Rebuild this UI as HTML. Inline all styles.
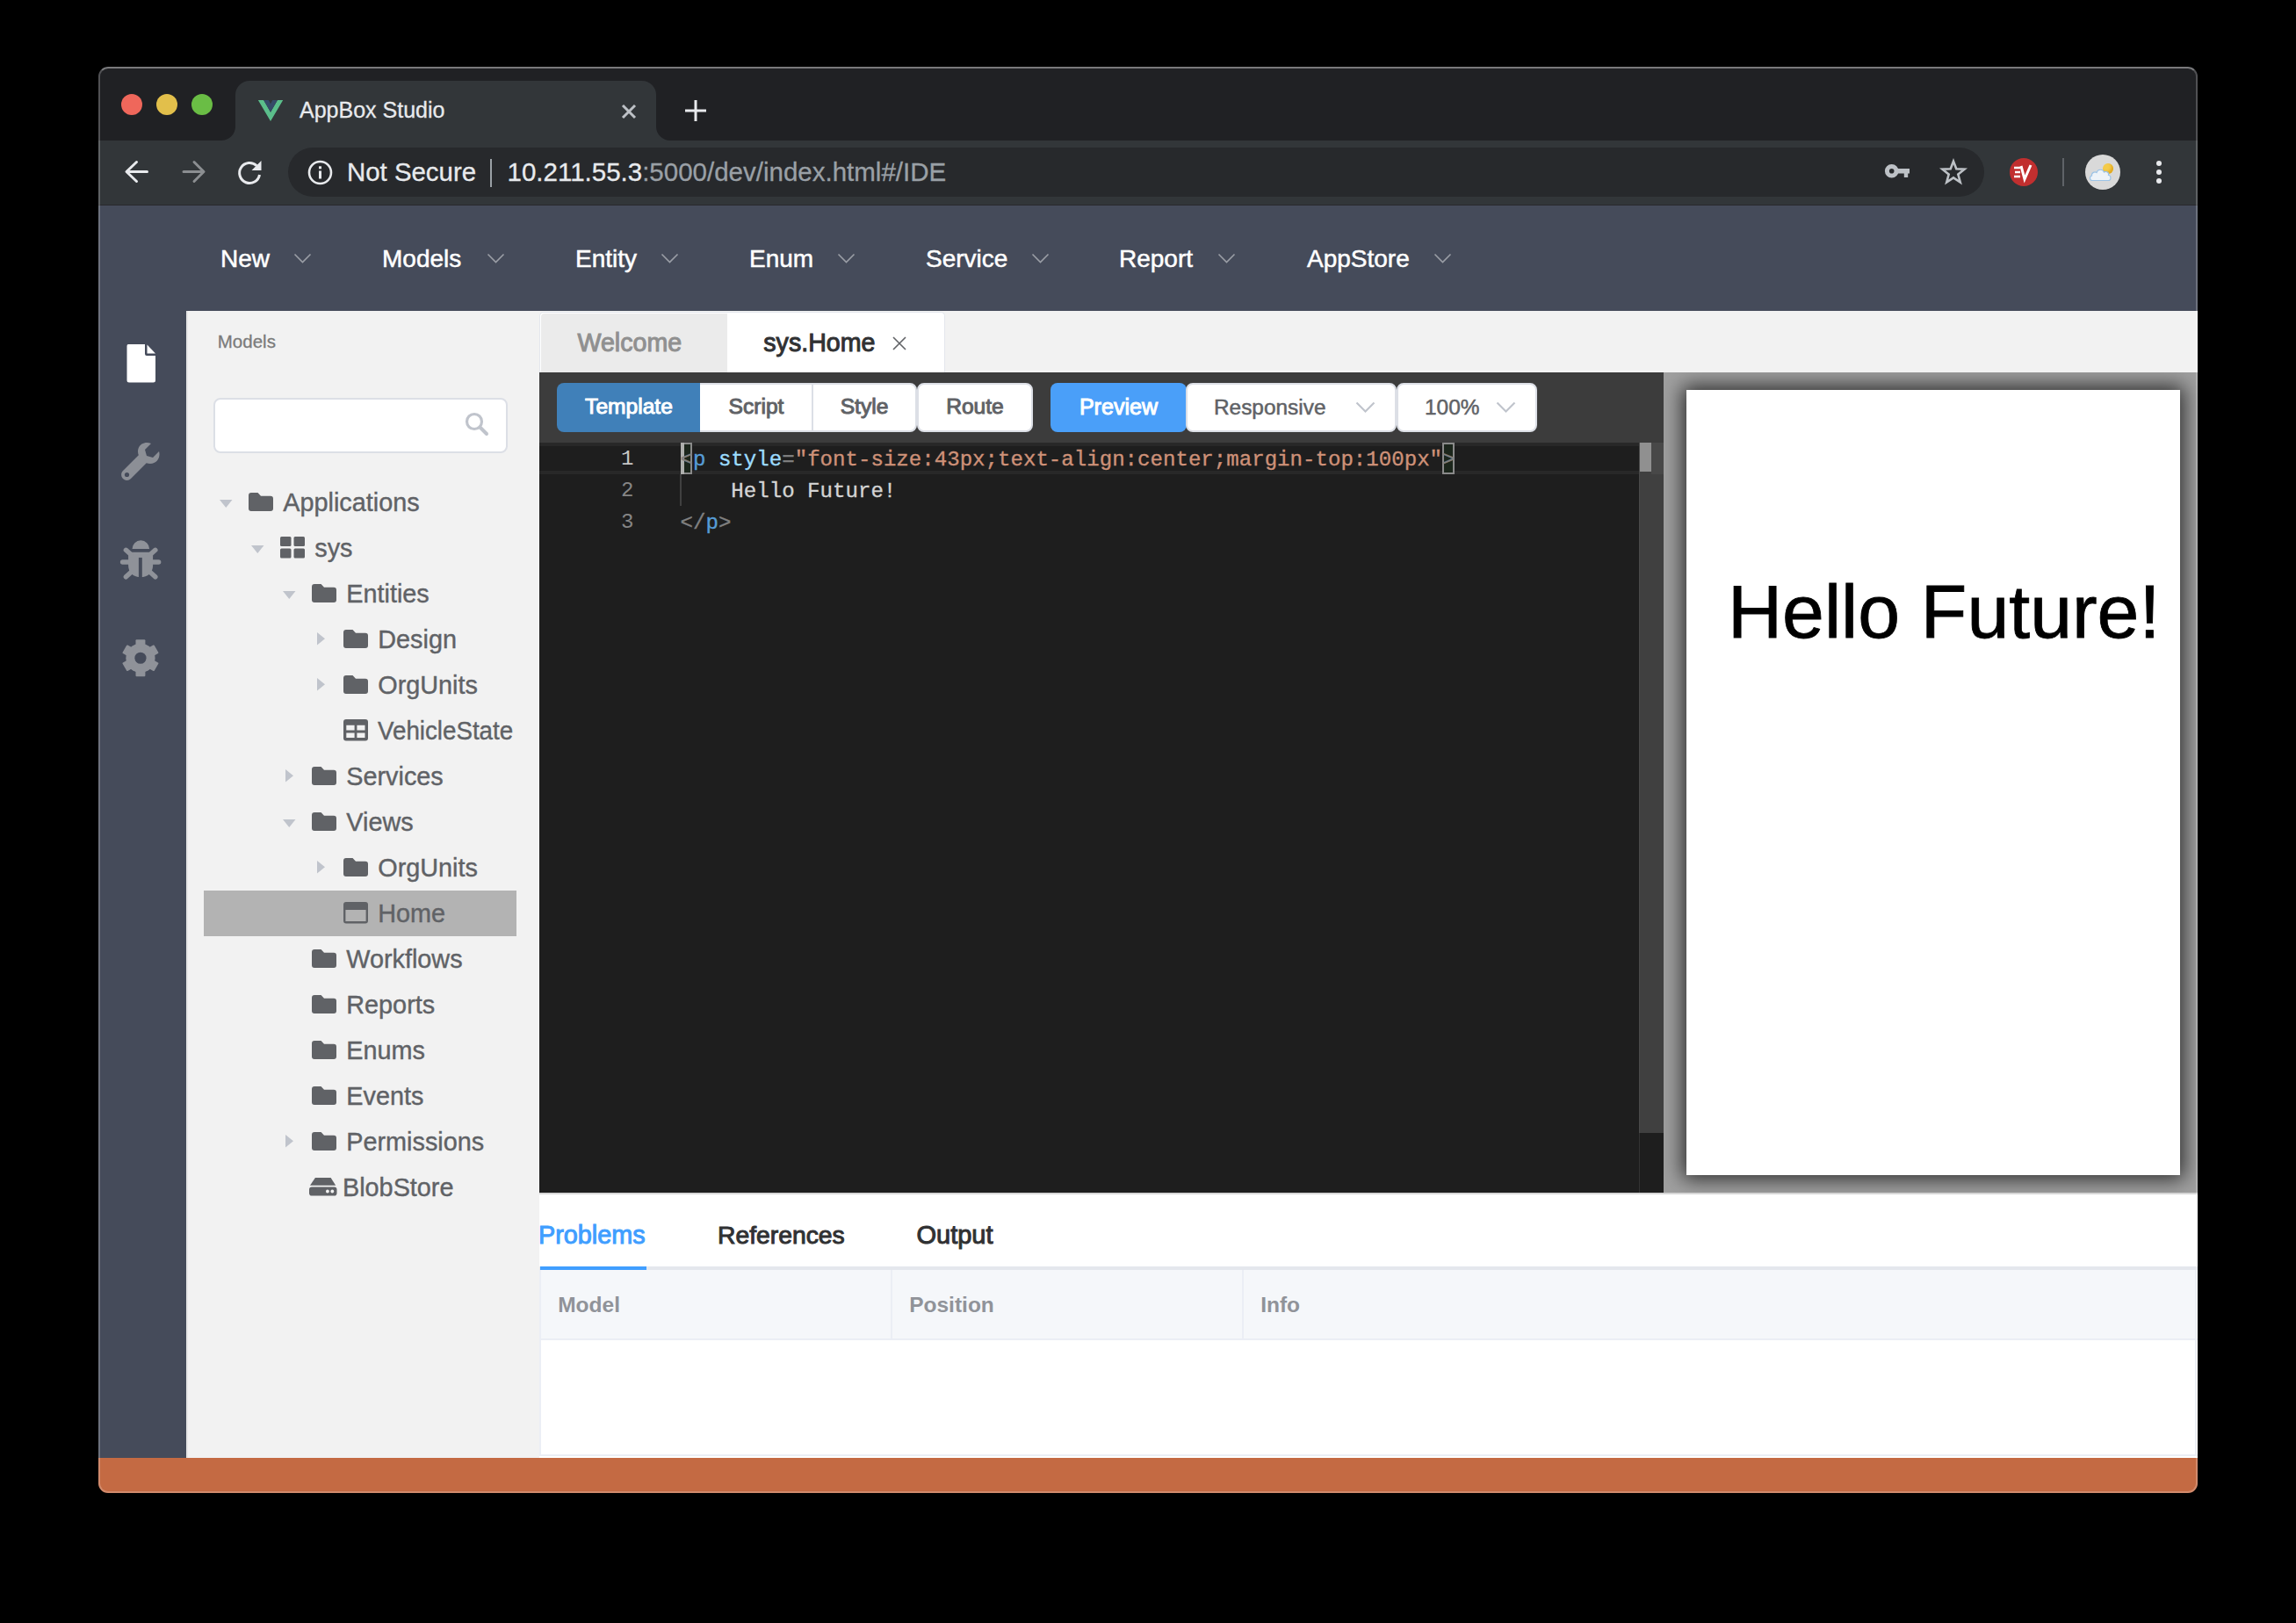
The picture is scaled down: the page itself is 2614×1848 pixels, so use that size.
<!DOCTYPE html>
<html><head><meta charset="utf-8">
<style>
*{box-sizing:border-box;margin:0;padding:0}
html,body{width:2614px;height:1848px;background:#000;overflow:hidden;font-family:"Liberation Sans",sans-serif}
.a{position:absolute}
.t{position:absolute;white-space:pre;line-height:1}
#win{position:absolute;left:112px;top:76px;width:2390px;height:1624px;border-radius:11px;overflow:hidden;background:#202124}
</style></head><body>
<div id="win">
  <!-- title bar -->
  <div class="a" style="left:0;top:0;width:2390px;height:84px;background:#202124"></div>
  <!-- traffic lights -->
  <div class="a" style="left:26px;top:31px;width:24px;height:24px;border-radius:50%;background:#ef675b"></div>
  <div class="a" style="left:66px;top:31px;width:24px;height:24px;border-radius:50%;background:#e2bf4b"></div>
  <div class="a" style="left:106px;top:31px;width:24px;height:24px;border-radius:50%;background:#6abd45"></div>
  <!-- tab -->
  <div class="a" style="left:156px;top:16px;width:479px;height:68px;background:#323639;border-radius:16px 16px 0 0"></div>
  <!-- toolbar -->
  <div class="a" style="left:0;top:84px;width:2390px;height:74px;background:#323639;border-bottom:1px solid #28292c"></div>
  <!-- omnibox -->
  <div class="a" style="left:216px;top:92px;width:1931px;height:56px;border-radius:28px;background:#27292c"></div>
  <!-- tab flares -->
  <svg class="a" style="left:140px;top:68px" width="16" height="16" viewBox="0 0 16 16"><path d="M16 0 V16 H0 A16 16 0 0 0 16 0 Z" fill="#323639"/></svg>
  <svg class="a" style="left:635px;top:68px" width="16" height="16" viewBox="0 0 16 16"><path d="M0 0 V16 H16 A16 16 0 0 1 0 0 Z" fill="#323639"/></svg>
  <!-- vue logo -->
  <svg class="a" style="left:181px;top:37px" width="30" height="26" viewBox="0 0 30 26">
    <path d="M0.86 1 L7.17 1 L15.03 14.7 L22.9 1 L29.2 1 L15.03 24.9 Z" fill="#5bbe8b"/>
    <path d="M7.17 1 L12.8 1 L15.03 5.2 L17.3 1 L22.9 1 L15.03 14.7 Z" fill="#354a68"/>
  </svg>
  <div class="t" style="left:229px;top:36.8px;font-size:25px;color:#e8eaed;-webkit-text-stroke:0.3px #e8eaed">AppBox Studio</div>
  <!-- tab close -->
  <svg class="a" style="left:594px;top:41px" width="20" height="20" viewBox="0 0 20 20"><path d="M3 3 L17 17 M17 3 L3 17" stroke="#bdc1c6" stroke-width="3" stroke-linecap="butt"/></svg>
  <!-- plus -->
  <svg class="a" style="left:666px;top:36px" width="28" height="28" viewBox="0 0 28 28"><path d="M14 2 V26 M2 14 H26" stroke="#e8eaed" stroke-width="3"/></svg>
  <!-- nav -->
  <svg class="a" style="left:26px;top:102px" width="36" height="36" viewBox="0 0 36 36"><path d="M29.5 17.5 H6.5 M17.5 6.5 L6 17.5 L17.5 28.5" stroke="#e8eaed" stroke-width="3" fill="none" stroke-linecap="round" stroke-linejoin="round"/></svg>
  <svg class="a" style="left:91px;top:102px" width="36" height="36" viewBox="0 0 36 36"><path d="M6 17.5 H28.5 M18 6.5 L29 17.5 L18 28.5" stroke="#8b8e91" stroke-width="3" fill="none" stroke-linecap="round" stroke-linejoin="round"/></svg>
  <svg class="a" style="left:155px;top:103px" width="36" height="36" viewBox="0 0 36 36"><path d="M28.5 20 A11.5 11.5 0 1 1 25.2 9.8" stroke="#e8eaed" stroke-width="3" fill="none"/><path d="M30.5 4 V15 H19.5 Z" fill="#e8eaed"/></svg>
  <!-- omnibox content -->
  <svg class="a" style="left:237px;top:105px" width="31" height="31" viewBox="0 0 31 31"><circle cx="15.5" cy="15.5" r="12.5" stroke="#e8eaed" stroke-width="2.6" fill="none"/><rect x="14" y="13.5" width="3" height="9" fill="#e8eaed"/><rect x="14" y="8.3" width="3" height="3" fill="#e8eaed"/></svg>
  <div class="t" style="left:283px;top:105.1px;font-size:29.4px;color:#e8eaed;-webkit-text-stroke:0.3px #e8eaed">Not Secure</div>
  <div class="a" style="left:446px;top:105px;width:2px;height:32px;background:#9aa0a6"></div>
  <div class="t" style="left:465.5px;top:104.9px;font-size:29.5px;color:#9aa0a6;-webkit-text-stroke:0.3px"><!----><span style="color:#e8eaed">10.211.55.3</span>:5000/dev/index.html#/IDE</div>
  <!-- right icons -->
  <svg class="a" style="left:2032px;top:106px" width="32" height="28" viewBox="0 0 32 28"><circle cx="9.7" cy="12.8" r="5.3" stroke="#bdc1c6" stroke-width="5" fill="none"/><path d="M14.5 10 H30 V15.6 H28.2 V20 H23.8 V15.6 H14.5 Z" fill="#bdc1c6"/></svg>
  <svg class="a" style="left:2095px;top:104px" width="34" height="32" viewBox="0 0 34 32"><path d="M17.00 3.60 L20.29 12.27 L29.55 12.72 L22.33 18.53 L24.76 27.48 L17.00 22.40 L9.24 27.48 L11.67 18.53 L4.45 12.72 L13.71 12.27 Z" stroke="#bdc1c6" stroke-width="2.6" fill="none" stroke-linejoin="miter"/></svg>
  <div class="a" style="left:2176px;top:104px;width:32px;height:32px;border-radius:50%;background:#c12f2f"></div>
  <svg class="a" style="left:2176px;top:104px" width="32" height="32" viewBox="0 0 32 32"><path d="M5 11 H12 M6 16 H12 M5 21 H12" stroke="#fff" stroke-width="2.4"/><path d="M13 9 L17 24 L24 8" stroke="#fff" stroke-width="3" fill="none"/></svg>
  <div class="a" style="left:2236px;top:104px;width:2px;height:32px;background:#5f6368"></div>
  <div class="a" style="left:2262px;top:100px;width:40px;height:40px;border-radius:50%;background:#d9d9d9"></div>
  <div class="a" style="left:2281.5px;top:109.8px;width:12px;height:12px;border-radius:50%;background:#f4cb4a;box-shadow:inset -2px -2px 3px #e0a820"></div>
  <svg class="a" style="left:2266px;top:112px" width="28" height="20" viewBox="0 0 28 20"><path d="M4 17.5 C1 17.5 0.5 13 3.5 12 C3 8.5 7 7 9 8.5 C10 4.5 16 4 17.5 8 C20 6.5 23.5 8.5 22.5 11.5 C25.5 11.5 26 17.5 22.5 17.5 Z" fill="#eef3f8" stroke="#9cc3e6" stroke-width="1.2"/></svg>
  <div class="a" style="left:2343px;top:107px;width:6px;height:6px;border-radius:50%;background:#e8eaed"></div>
  <div class="a" style="left:2343px;top:117px;width:6px;height:6px;border-radius:50%;background:#e8eaed"></div>
  <div class="a" style="left:2343px;top:127px;width:6px;height:6px;border-radius:50%;background:#e8eaed"></div>
  <!-- app header -->
  <div class="a" style="left:0;top:158px;width:2390px;height:120px;background:#454b5a"></div>
  <!-- left icon bar -->
  <div class="a" style="left:0;top:278px;width:100px;height:1306px;background:#454b5a"></div>
  <!-- menu -->
  <div class="t" style="left:139px;top:205px;font-size:28px;color:#fff;-webkit-text-stroke:0.5px #fff">New</div>
  <svg class="a" style="left:222.0px;top:211.5px" width="21" height="13" viewBox="0 0 21 13"><path d="M1.5 1.5 L10.5 10.5 L19.5 1.5" stroke="#9a9ea6" stroke-width="1.6" fill="none"/></svg>
  <div class="t" style="left:323px;top:205px;font-size:28px;color:#fff;-webkit-text-stroke:0.5px #fff">Models</div>
  <svg class="a" style="left:442.0px;top:211.5px" width="21" height="13" viewBox="0 0 21 13"><path d="M1.5 1.5 L10.5 10.5 L19.5 1.5" stroke="#9a9ea6" stroke-width="1.6" fill="none"/></svg>
  <div class="t" style="left:543px;top:205px;font-size:28px;color:#fff;-webkit-text-stroke:0.5px #fff">Entity</div>
  <svg class="a" style="left:640.0px;top:211.5px" width="21" height="13" viewBox="0 0 21 13"><path d="M1.5 1.5 L10.5 10.5 L19.5 1.5" stroke="#9a9ea6" stroke-width="1.6" fill="none"/></svg>
  <div class="t" style="left:741px;top:205px;font-size:28px;color:#fff;-webkit-text-stroke:0.5px #fff">Enum</div>
  <svg class="a" style="left:840.5px;top:211.5px" width="21" height="13" viewBox="0 0 21 13"><path d="M1.5 1.5 L10.5 10.5 L19.5 1.5" stroke="#9a9ea6" stroke-width="1.6" fill="none"/></svg>
  <div class="t" style="left:942px;top:205px;font-size:28px;color:#fff;-webkit-text-stroke:0.5px #fff">Service</div>
  <svg class="a" style="left:1061.5px;top:211.5px" width="21" height="13" viewBox="0 0 21 13"><path d="M1.5 1.5 L10.5 10.5 L19.5 1.5" stroke="#9a9ea6" stroke-width="1.6" fill="none"/></svg>
  <div class="t" style="left:1162px;top:205px;font-size:28px;color:#fff;-webkit-text-stroke:0.5px #fff">Report</div>
  <svg class="a" style="left:1274.0px;top:211.5px" width="21" height="13" viewBox="0 0 21 13"><path d="M1.5 1.5 L10.5 10.5 L19.5 1.5" stroke="#9a9ea6" stroke-width="1.6" fill="none"/></svg>
  <div class="t" style="left:1376px;top:205px;font-size:28px;color:#fff;-webkit-text-stroke:0.5px #fff">AppStore</div>
  <svg class="a" style="left:1520.0px;top:211.5px" width="21" height="13" viewBox="0 0 21 13"><path d="M1.5 1.5 L10.5 10.5 L19.5 1.5" stroke="#9a9ea6" stroke-width="1.6" fill="none"/></svg>
  <!-- left icons -->
  <svg class="a" style="left:32px;top:316px" width="34" height="44" viewBox="0 0 34 44"><path d="M2 0 H21 V11 Q21 13 23 13 H33 V41 Q33 43.5 30.5 43.5 H3 Q0.5 43.5 0.5 41 V2 Q0.5 0 2 0 Z" fill="#fff"/><path d="M23.5 0.5 L33 10.5 H23.5 Z" fill="#fff"/></svg>
  <svg class="a" style="left:25px;top:426px" width="46" height="46" viewBox="0 0 46 46"><path d="M44 12 L37 19 L30 17 L28 10 L35 3 C28 0 20 4 20 12 C20 13.5 20.3 15 20.8 16.3 L3 34 C0.5 36.5 0.5 40.5 3 43 C5.5 45.5 9.5 45.5 12 43 L29.7 25.2 C31 25.7 32.5 26 34 26 C42 26 46 18 44 12 Z" fill="#8c8f96"/><circle cx="7.5" cy="38.5" r="2.6" fill="#454b5a"/></svg>
  <svg class="a" style="left:20px;top:532px" width="56" height="56" viewBox="0 0 56 56"><path d="M18.5 17.1 A9.8 9.8 0 0 1 38.1 17.1 Z" fill="#8f9299"/><path d="M14.1 20.7 H42.1 V36 C42.1 44 36 49.3 28.1 49.3 C20.2 49.3 14.1 44 14.1 36 Z" fill="#8f9299"/><rect x="25.9" y="26.9" width="3.9" height="24" fill="#454b5a"/><path d="M11.4 18.3 L17.5 23.8 M44.8 18.3 L38.7 23.8 M7.6 32.1 H16 M48.6 32.1 H40.2 M11.4 48.8 L17.5 43.2 M44.8 48.8 L38.7 43.2" stroke="#8f9299" stroke-width="5.5" stroke-linecap="round"/></svg>
  <svg class="a" style="left:20px;top:646px" width="56" height="56" viewBox="0 0 56 56"><g transform="translate(27.95 27.26)" fill="#8f9299"><circle r="16.6"/><rect x="-5.45" y="-20.9" width="10.9" height="9" rx="1" transform="rotate(0)"/><rect x="-5.45" y="-20.9" width="10.9" height="9" rx="1" transform="rotate(60)"/><rect x="-5.45" y="-20.9" width="10.9" height="9" rx="1" transform="rotate(120)"/><rect x="-5.45" y="-20.9" width="10.9" height="9" rx="1" transform="rotate(180)"/><rect x="-5.45" y="-20.9" width="10.9" height="9" rx="1" transform="rotate(240)"/><rect x="-5.45" y="-20.9" width="10.9" height="9" rx="1" transform="rotate(300)"/><circle r="6.6" fill="#454b5a"/></g></svg>
  <!-- sidebar -->
  <div class="a" style="left:100px;top:278px;width:402px;height:1306px;background:#f2f2f2"></div>
  <div class="t" style="left:135.8px;top:303.2px;font-size:20.5px;color:#7b7b7b;-webkit-text-stroke:0.3px #7b7b7b">Models</div>
  <div class="a" style="left:100px;top:278px;width:2px;height:1306px;background:#e6e6e6"></div>
  <div class="a" style="left:130.5px;top:376.5px;width:335px;height:63.5px;border:2px solid #dcdfe6;border-radius:8px;background:#fff"></div>
  <svg class="a" style="left:416px;top:392px" width="30" height="30" viewBox="0 0 30 30"><circle cx="12" cy="12" r="8.5" stroke="#c0c4cc" stroke-width="3.2" fill="none"/><path d="M18.5 18.5 L26 26" stroke="#c0c4cc" stroke-width="4" stroke-linecap="round"/></svg>
  <div class="a" style="left:120px;top:938px;width:356px;height:52px;background:#b3b3b3"></div>
  <svg class="a" style="left:137.6px;top:493.0px" width="15" height="9" viewBox="0 0 15 9"><path d="M0 0 H14.5 L7.25 9 Z" fill="#c0c4cc"/></svg>
  <svg class="a" style="left:171.4px;top:485.0px" width="28" height="21" viewBox="0 0 28 21"><path d="M3 0 H10.5 L14 3.8 H25 Q28 3.8 28 6.8 V18 Q28 21 25 21 H3 Q0 21 0 18 V3 Q0 0 3 0 Z" fill="#606266"/></svg>
  <div class="t" style="left:210.3px;top:481.9px;font-size:28.8px;color:#606266;-webkit-text-stroke:0.4px #606266">Applications</div>
  <svg class="a" style="left:173.6px;top:545.0px" width="15" height="9" viewBox="0 0 15 9"><path d="M0 0 H14.5 L7.25 9 Z" fill="#c0c4cc"/></svg>
  <svg class="a" style="left:207.4px;top:535.1px" width="28" height="25" viewBox="0 0 28 25"><rect x="0" y="0" width="12.5" height="11" rx="1.5" fill="#606266"/><rect x="15.5" y="0" width="12.5" height="11" rx="1.5" fill="#606266"/><rect x="0" y="13.5" width="12.5" height="11" rx="1.5" fill="#606266"/><rect x="15.5" y="13.5" width="12.5" height="11" rx="1.5" fill="#606266"/></svg>
  <div class="t" style="left:246.3px;top:533.9px;font-size:28.8px;color:#606266;-webkit-text-stroke:0.4px #606266">sys</div>
  <svg class="a" style="left:209.6px;top:597.0px" width="15" height="9" viewBox="0 0 15 9"><path d="M0 0 H14.5 L7.25 9 Z" fill="#c0c4cc"/></svg>
  <svg class="a" style="left:243.4px;top:589.0px" width="28" height="21" viewBox="0 0 28 21"><path d="M3 0 H10.5 L14 3.8 H25 Q28 3.8 28 6.8 V18 Q28 21 25 21 H3 Q0 21 0 18 V3 Q0 0 3 0 Z" fill="#606266"/></svg>
  <div class="t" style="left:282.3px;top:585.9px;font-size:28.8px;color:#606266;-webkit-text-stroke:0.4px #606266">Entities</div>
  <svg class="a" style="left:249.0px;top:643.7px" width="9" height="15" viewBox="0 0 9 15"><path d="M0 0 V14.6 L9 7.3 Z" fill="#c0c4cc"/></svg>
  <svg class="a" style="left:279.4px;top:641.0px" width="28" height="21" viewBox="0 0 28 21"><path d="M3 0 H10.5 L14 3.8 H25 Q28 3.8 28 6.8 V18 Q28 21 25 21 H3 Q0 21 0 18 V3 Q0 0 3 0 Z" fill="#606266"/></svg>
  <div class="t" style="left:318.3px;top:637.9px;font-size:28.8px;color:#606266;-webkit-text-stroke:0.4px #606266">Design</div>
  <svg class="a" style="left:249.0px;top:695.7px" width="9" height="15" viewBox="0 0 9 15"><path d="M0 0 V14.6 L9 7.3 Z" fill="#c0c4cc"/></svg>
  <svg class="a" style="left:279.4px;top:693.0px" width="28" height="21" viewBox="0 0 28 21"><path d="M3 0 H10.5 L14 3.8 H25 Q28 3.8 28 6.8 V18 Q28 21 25 21 H3 Q0 21 0 18 V3 Q0 0 3 0 Z" fill="#606266"/></svg>
  <div class="t" style="left:318.3px;top:689.9px;font-size:28.8px;color:#606266;-webkit-text-stroke:0.4px #606266">OrgUnits</div>
  <svg class="a" style="left:279.4px;top:743.1px" width="28" height="25" viewBox="0 0 28 25"><path fill-rule="evenodd" d="M3 0 H25 Q28 0 28 3 V21.5 Q28 24.5 25 24.5 H3 Q0 24.5 0 21.5 V3 Q0 0 3 0 Z M3.3 6.7 V12.6 H12.6 V6.7 Z M15.4 6.7 V12.6 H24.5 V6.7 Z M3.3 15.5 V21.1 H12.6 V15.5 Z M15.4 15.5 V21.1 H24.5 V15.5 Z" fill="#606266"/></svg>
  <div class="t" style="left:318.3px;top:741.9px;font-size:28.8px;color:#606266;-webkit-text-stroke:0.4px #606266;transform:scaleX(0.963);transform-origin:0 0">VehicleState</div>
  <svg class="a" style="left:213.0px;top:799.7px" width="9" height="15" viewBox="0 0 9 15"><path d="M0 0 V14.6 L9 7.3 Z" fill="#c0c4cc"/></svg>
  <svg class="a" style="left:243.4px;top:797.0px" width="28" height="21" viewBox="0 0 28 21"><path d="M3 0 H10.5 L14 3.8 H25 Q28 3.8 28 6.8 V18 Q28 21 25 21 H3 Q0 21 0 18 V3 Q0 0 3 0 Z" fill="#606266"/></svg>
  <div class="t" style="left:282.3px;top:793.9px;font-size:28.8px;color:#606266;-webkit-text-stroke:0.4px #606266">Services</div>
  <svg class="a" style="left:209.6px;top:857.0px" width="15" height="9" viewBox="0 0 15 9"><path d="M0 0 H14.5 L7.25 9 Z" fill="#c0c4cc"/></svg>
  <svg class="a" style="left:243.4px;top:849.0px" width="28" height="21" viewBox="0 0 28 21"><path d="M3 0 H10.5 L14 3.8 H25 Q28 3.8 28 6.8 V18 Q28 21 25 21 H3 Q0 21 0 18 V3 Q0 0 3 0 Z" fill="#606266"/></svg>
  <div class="t" style="left:282.3px;top:845.9px;font-size:28.8px;color:#606266;-webkit-text-stroke:0.4px #606266">Views</div>
  <svg class="a" style="left:249.0px;top:903.7px" width="9" height="15" viewBox="0 0 9 15"><path d="M0 0 V14.6 L9 7.3 Z" fill="#c0c4cc"/></svg>
  <svg class="a" style="left:279.4px;top:901.0px" width="28" height="21" viewBox="0 0 28 21"><path d="M3 0 H10.5 L14 3.8 H25 Q28 3.8 28 6.8 V18 Q28 21 25 21 H3 Q0 21 0 18 V3 Q0 0 3 0 Z" fill="#606266"/></svg>
  <div class="t" style="left:318.3px;top:897.9px;font-size:28.8px;color:#606266;-webkit-text-stroke:0.4px #606266">OrgUnits</div>
  <svg class="a" style="left:279.4px;top:951.1px" width="28" height="25" viewBox="0 0 28 25"><path fill-rule="evenodd" d="M3 0 H25 Q28 0 28 3 V21.5 Q28 24.5 25 24.5 H3 Q0 24.5 0 21.5 V3 Q0 0 3 0 Z M2.4 8.9 V21.9 H25.6 V8.9 Z" fill="#606266"/></svg>
  <div class="t" style="left:318.3px;top:949.9px;font-size:28.8px;color:#606266;-webkit-text-stroke:0.4px #606266">Home</div>
  <svg class="a" style="left:243.4px;top:1005.0px" width="28" height="21" viewBox="0 0 28 21"><path d="M3 0 H10.5 L14 3.8 H25 Q28 3.8 28 6.8 V18 Q28 21 25 21 H3 Q0 21 0 18 V3 Q0 0 3 0 Z" fill="#606266"/></svg>
  <div class="t" style="left:282.3px;top:1001.9px;font-size:28.8px;color:#606266;-webkit-text-stroke:0.4px #606266">Workflows</div>
  <svg class="a" style="left:243.4px;top:1057.0px" width="28" height="21" viewBox="0 0 28 21"><path d="M3 0 H10.5 L14 3.8 H25 Q28 3.8 28 6.8 V18 Q28 21 25 21 H3 Q0 21 0 18 V3 Q0 0 3 0 Z" fill="#606266"/></svg>
  <div class="t" style="left:282.3px;top:1053.9px;font-size:28.8px;color:#606266;-webkit-text-stroke:0.4px #606266">Reports</div>
  <svg class="a" style="left:243.4px;top:1109.0px" width="28" height="21" viewBox="0 0 28 21"><path d="M3 0 H10.5 L14 3.8 H25 Q28 3.8 28 6.8 V18 Q28 21 25 21 H3 Q0 21 0 18 V3 Q0 0 3 0 Z" fill="#606266"/></svg>
  <div class="t" style="left:282.3px;top:1105.9px;font-size:28.8px;color:#606266;-webkit-text-stroke:0.4px #606266">Enums</div>
  <svg class="a" style="left:243.4px;top:1161.0px" width="28" height="21" viewBox="0 0 28 21"><path d="M3 0 H10.5 L14 3.8 H25 Q28 3.8 28 6.8 V18 Q28 21 25 21 H3 Q0 21 0 18 V3 Q0 0 3 0 Z" fill="#606266"/></svg>
  <div class="t" style="left:282.3px;top:1157.9px;font-size:28.8px;color:#606266;-webkit-text-stroke:0.4px #606266">Events</div>
  <svg class="a" style="left:213.0px;top:1215.7px" width="9" height="15" viewBox="0 0 9 15"><path d="M0 0 V14.6 L9 7.3 Z" fill="#c0c4cc"/></svg>
  <svg class="a" style="left:243.4px;top:1213.0px" width="28" height="21" viewBox="0 0 28 21"><path d="M3 0 H10.5 L14 3.8 H25 Q28 3.8 28 6.8 V18 Q28 21 25 21 H3 Q0 21 0 18 V3 Q0 0 3 0 Z" fill="#606266"/></svg>
  <div class="t" style="left:282.3px;top:1209.9px;font-size:28.8px;color:#606266;-webkit-text-stroke:0.4px #606266">Permissions</div>
  <svg class="a" style="left:240px;top:1265.0px" width="32" height="21" viewBox="0 0 32 21"><path d="M6.9 0 H24.6 L30.2 8.7 H1 Z" fill="#606266"/><path fill-rule="evenodd" d="M3 10.4 H28.5 Q31.5 10.4 31.5 13.4 V17.5 Q31.5 20.6 28.5 20.6 H3 Q0 20.6 0 17.5 V13.4 Q0 10.4 3 10.4 Z" fill="#606266"/><circle cx="20.9" cy="15.5" r="1.9" fill="#f2f2f2"/><circle cx="26.3" cy="15.5" r="1.9" fill="#f2f2f2"/></svg>
  <div class="t" style="left:278.0px;top:1261.9px;font-size:28.8px;color:#606266;-webkit-text-stroke:0.4px #606266">BlobStore</div>
  <!-- tab bar -->
  <div class="a" style="left:502px;top:278px;width:1888px;height:70px;background:#f2f2f2"></div>
  <!-- editor toolbar -->
  <div class="a" style="left:502px;top:348px;width:1280px;height:80px;background:#3c3c3c"></div>
  <!-- code -->
  <div class="a" style="left:502px;top:428px;width:1280px;height:854px;background:#1e1e1e"></div>
  <!-- editor tabs -->
  <div class="a" style="left:502px;top:279px;width:462px;height:69px;background:#fff;border:1.5px solid #e4e7ed;border-bottom:none;border-radius:5px 5px 0 0"></div>
  <div class="a" style="left:503.5px;top:280.5px;width:212.5px;height:67.5px;background:#ebebeb;border-radius:4px 0 0 0"></div>
  <div class="t" style="left:545.5px;top:300.3px;font-size:28.6px;color:#909090;-webkit-text-stroke:1px #909090">Welcome</div>
    <div class="t" style="left:757.3px;top:300.1px;font-size:28.6px;color:#303133;-webkit-text-stroke:1px #303133">sys.Home</div>
  <svg class="a" style="left:903px;top:306px" width="18" height="18" viewBox="0 0 18 18"><path d="M2 2 L16 16 M16 2 L2 16" stroke="#606266" stroke-width="1.6"/></svg>
  <!-- buttons -->
  <div class="a" style="left:522px;top:360px;width:164px;height:56px;background:#4080b9;border-radius:8px 0 0 8px"></div>
  <div class="a" style="left:685px;top:360px;width:129px;height:56px;background:#fff;border:2px solid #dcdfe6;border-left:none"></div>
  <div class="a" style="left:812px;top:360px;width:120px;height:56px;background:#fff;border:2px solid #dcdfe6;border-radius:0 8px 8px 0"></div>
  <div class="a" style="left:932px;top:360px;width:132px;height:56px;background:#fff;border:2px solid #dcdfe6;border-radius:8px"></div>
  <div class="a" style="left:1084px;top:360px;width:155px;height:56px;background:#4a9ff9;border-radius:8px"></div>
  <div class="a" style="left:1238px;top:360px;width:240px;height:56px;background:#fff;border:2px solid #dcdfe6;border-radius:8px"></div>
  <div class="a" style="left:1478px;top:360px;width:160px;height:56px;background:#fff;border:2px solid #dcdfe6;border-radius:8px"></div>
  <div class="t" style="left:522px;width:164px;text-align:center;top:375.4px;font-size:24.6px;color:#fff;-webkit-text-stroke:1px #fff">Template</div>
  <div class="t" style="left:685px;width:128px;text-align:center;top:375.4px;font-size:24.6px;color:#606266;-webkit-text-stroke:1px #606266">Script</div>
  <div class="t" style="left:813px;width:118px;text-align:center;top:375.4px;font-size:24.6px;color:#606266;-webkit-text-stroke:1px #606266">Style</div>
  <div class="t" style="left:932px;width:132px;text-align:center;top:375.4px;font-size:24.6px;color:#606266;-webkit-text-stroke:1px #606266">Route</div>
  <div class="t" style="left:1084px;width:155px;text-align:center;top:375px;font-size:25.1px;color:#fff;-webkit-text-stroke:1px #fff">Preview</div>
  <div class="t" style="left:1270px;top:376px;font-size:24.4px;color:#606266;-webkit-text-stroke:0.5px #606266">Responsive</div>
  <svg class="a" style="left:1431px;top:381px" width="23" height="14" viewBox="0 0 23 14"><path d="M1.5 1.5 L11.5 11.5 L21.5 1.5" stroke="#c0c4cc" stroke-width="2.2" fill="none"/></svg>
  <div class="t" style="left:1510px;top:376px;font-size:24.4px;color:#606266;-webkit-text-stroke:0.5px #606266">100%</div>
  <svg class="a" style="left:1591px;top:381px" width="23" height="14" viewBox="0 0 23 14"><path d="M1.5 1.5 L11.5 11.5 L21.5 1.5" stroke="#c0c4cc" stroke-width="2.2" fill="none"/></svg>
  <!-- code -->
  <div class="a" style="left:502px;top:428px;width:1252px;height:36px;border-top:4px solid #282828;border-bottom:4px solid #282828"></div>
  <div class="a" style="left:1754px;top:428px;width:28px;height:786px;background:#404040;border-left:1px solid #4a4a4a"></div>
  <div class="a" style="left:1768px;top:428px;width:14px;height:36px;background:#484848"></div>
  <div class="a" style="left:1754px;top:1214px;width:1px;height:68px;background:#333"></div>
  <div class="a" style="left:1755px;top:428px;width:13px;height:33px;background:#909090"></div>
  <div class="a" style="left:662px;top:464px;width:2px;height:36px;background:#404040"></div>
  <div class="a" style="left:662.5px;top:428px;width:13.5px;height:36px;border:2px solid #8a8a8a;background:#1c261c"></div>
  <div class="a" style="left:662.5px;top:428px;width:4px;height:36px;background:#aeafad"></div>
  <div class="a" style="left:1530.3px;top:428px;width:13.5px;height:36px;border:2px solid #8a8a8a;background:#1c261c"></div>
  <div class="t" style="left:502px;width:107.5px;text-align:right;top:435.2px;font-family:'Liberation Mono',monospace;font-size:24.1px;color:#c6c6c6">1</div>
  <div class="t" style="left:502px;width:107.5px;text-align:right;top:471.2px;font-family:'Liberation Mono',monospace;font-size:24.1px;color:#858585">2</div>
  <div class="t" style="left:502px;width:107.5px;text-align:right;top:507.2px;font-family:'Liberation Mono',monospace;font-size:24.1px;color:#858585">3</div>
  <div class="t" style="left:662.5px;top:435.6px;font-family:'Liberation Mono',monospace;font-size:24.1px;color:#d4d4d4;-webkit-text-stroke:0.35px"><span style="color:#808080">&lt;</span><span style="color:#569cd6">p</span> <span style="color:#9cdcfe">style</span><span style="color:#808080">=</span><span style="color:#ce9178">"font-size:43px;text-align:center;margin-top:100px"</span><span style="color:#808080">&gt;</span></div>
  <div class="t" style="left:662.5px;top:471.6px;font-family:'Liberation Mono',monospace;font-size:24.1px;color:#d4d4d4;-webkit-text-stroke:0.35px">    Hello Future!</div>
  <div class="t" style="left:662.5px;top:507.6px;font-family:'Liberation Mono',monospace;font-size:24.1px;color:#d4d4d4;-webkit-text-stroke:0.35px"><span style="color:#808080">&lt;/</span><span style="color:#569cd6">p</span><span style="color:#808080">&gt;</span></div>
  <!-- preview -->
  <div class="a" style="left:1782px;top:348px;width:608px;height:934px;background:#a0a0a0;overflow:hidden"><div class="a" style="left:26px;top:20px;width:562px;height:894px;background:#fff;box-shadow:0 0 22px 4px rgba(0,0,0,.75)"></div></div>
  <div class="t" style="left:1855px;top:576.7px;font-size:86px;color:#000;-webkit-text-stroke:0.8px #000">Hello Future!</div>
  <!-- bottom panel -->
  <div class="a" style="left:502px;top:1282px;width:1888px;height:2px;background:#d6d6d6"></div>
  <div class="a" style="left:502px;top:1284px;width:1888px;height:300px;background:#fff"></div>
  <div class="t" style="left:501px;top:1316px;font-size:28.8px;color:#409eff;-webkit-text-stroke:1px #409eff">Problems</div>
  <div class="t" style="left:705px;top:1316.2px;font-size:28.3px;color:#303133;-webkit-text-stroke:1px #303133">References</div>
  <div class="t" style="left:931.5px;top:1316.2px;font-size:29px;color:#303133;-webkit-text-stroke:1px #303133">Output</div>
  <div class="a" style="left:502px;top:1366px;width:1888px;height:4px;background:#e4e7ed"></div>
  <div class="a" style="left:503px;top:1366px;width:121px;height:4px;background:#409eff"></div>
  <div class="a" style="left:502px;top:1370px;width:1888px;height:80px;background:#f5f7fa;border-bottom:2px solid #ebeef5"></div>
  <div class="a" style="left:902px;top:1370px;width:2px;height:80px;background:#ebeef5"></div>
  <div class="a" style="left:1302px;top:1370px;width:2px;height:80px;background:#ebeef5"></div>
  <div class="a" style="left:502px;top:1370px;width:2px;height:212px;background:#ebeef5"></div>
  <div class="a" style="left:502px;top:1580px;width:1888px;height:2px;background:#ebeef5"></div>
  <div class="a" style="left:2387px;top:1370px;width:2px;height:212px;background:#ebeef5"></div>
  <div class="t" style="left:523.2px;top:1398px;font-size:24.5px;font-weight:bold;color:#909399">Model</div>
  <div class="t" style="left:923.2px;top:1398px;font-size:24.5px;font-weight:bold;color:#909399">Position</div>
  <div class="t" style="left:1323.2px;top:1398px;font-size:24.5px;font-weight:bold;color:#909399">Info</div>
  <!-- status bar -->
  <div class="a" style="left:0;top:1584px;width:2390px;height:40px;background:#c46a43"></div>
  <div class="a" style="left:0;top:0;width:2390px;height:1624px;border-radius:11px;border:2px solid rgba(255,255,255,.22);border-top-color:rgba(255,255,255,.4)"></div>
</div>
</body></html>
